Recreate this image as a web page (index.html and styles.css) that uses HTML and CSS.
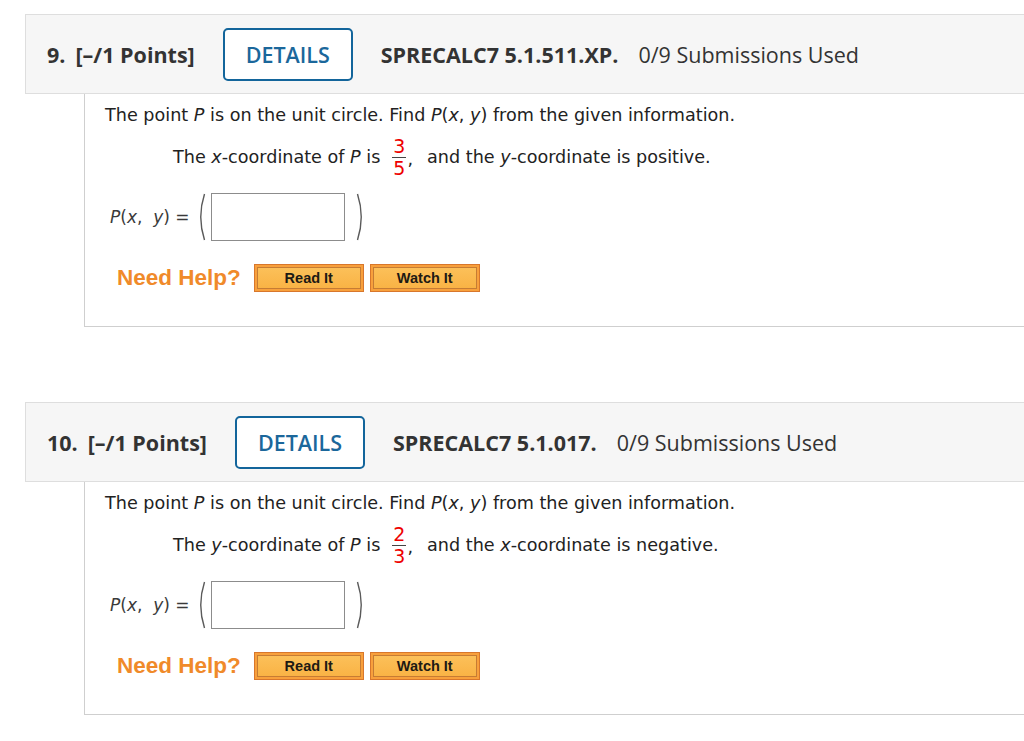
FILE: index.html
```html
<!DOCTYPE html>
<html>
<head>
<meta charset="utf-8">
<link rel="stylesheet" href="styles.css">
</head>
<body>
<div class="question">
  <div class="q-header">
    <span class="q-num">9.</span>
    <span class="q-points">[–/1 Points]</span>
    <span class="details">DETAILS</span>
    <span class="q-code">SPRECALC7 5.1.511.XP.</span>
    <span class="q-subs">0/9 Submissions Used</span>
  </div>
  <div class="q-body">
    <p class="line1">The point <i>P</i> is on the unit circle. Find <i>P</i>(<i>x</i>, <i>y</i>) from the given information.</p>
    <p class="line2"><span>The <i>x</i>-coordinate of <i>P</i> is</span><span class="frac"><span class="num">3</span><span class="den">5</span></span><span class="comma">,</span><span>and the <i>y</i>-coordinate is positive.</span></p>
    <div class="answer">
      <span class="label"><i>P</i>(<i>x</i>, &nbsp;<i>y</i>) =</span>
      <svg class="paren" width="10" height="48" viewBox="0 0 10 48"><path d="M8.5 1 Q1 24 8.5 47" fill="none" stroke="#5a5a5a" stroke-width="1.4"/></svg>
      <span class="input"></span>
      <svg class="paren close" width="10" height="48" viewBox="0 0 10 48"><path d="M1.5 1 Q9 24 1.5 47" fill="none" stroke="#5a5a5a" stroke-width="1.4"/></svg>
    </div>
    <div class="help">
      <span class="need">Need Help?</span>
      <span class="hbtn">Read It</span>
      <span class="hbtn watch">Watch It</span>
    </div>
  </div>
</div>

<div class="question second">
  <div class="q-header">
    <span class="q-num">10.</span>
    <span class="q-points">[–/1 Points]</span>
    <span class="details">DETAILS</span>
    <span class="q-code">SPRECALC7 5.1.017.</span>
    <span class="q-subs">0/9 Submissions Used</span>
  </div>
  <div class="q-body">
    <p class="line1">The point <i>P</i> is on the unit circle. Find <i>P</i>(<i>x</i>, <i>y</i>) from the given information.</p>
    <p class="line2"><span>The <i>y</i>-coordinate of <i>P</i> is</span><span class="frac"><span class="num">2</span><span class="den">3</span></span><span class="comma">,</span><span>and the <i>x</i>-coordinate is negative.</span></p>
    <div class="answer">
      <span class="label"><i>P</i>(<i>x</i>, &nbsp;<i>y</i>) =</span>
      <svg class="paren" width="10" height="48" viewBox="0 0 10 48"><path d="M8.5 1 Q1 24 8.5 47" fill="none" stroke="#5a5a5a" stroke-width="1.4"/></svg>
      <span class="input"></span>
      <svg class="paren close" width="10" height="48" viewBox="0 0 10 48"><path d="M1.5 1 Q9 24 1.5 47" fill="none" stroke="#5a5a5a" stroke-width="1.4"/></svg>
    </div>
    <div class="help">
      <span class="need">Need Help?</span>
      <span class="hbtn">Read It</span>
      <span class="hbtn watch">Watch It</span>
    </div>
  </div>
</div>
</body>
</html>
```

FILE: styles.css
```css
html, body {
  margin: 0;
  padding: 0;
  overflow: hidden;
  background: #ffffff;
}
body {
  padding-top: 14px;
  width: 1024px;
}
.question {
  margin-left: 25px;
  width: 1100px;
}
.question.second {
  margin-top: 75px;
}
.q-header {
  box-sizing: border-box;
  height: 80px;
  border: 1px solid #dedede;
  background: #f6f6f6;
  display: flex;
  align-items: center;
  padding-left: 21px;
  font-family: "Open Sans", sans-serif;
  font-size: 21.5px;
  color: #333333;
}
.q-num {
  font-weight: 700;
  margin-right: 10px;
}
.q-points {
  font-weight: 700;
}
.details {
  box-sizing: border-box;
  width: 130px;
  height: 53px;
  margin-left: 28px;
  border: 2px solid #13659b;
  border-radius: 5px;
  display: flex;
  align-items: center;
  justify-content: center;
  color: #1b679b;
  font-weight: 600;
  background: #ffffff;
}
.q-code {
  font-weight: 700;
  margin-left: 28px;
}
.q-subs {
  margin-left: 20px;
  font-weight: 400;
}
.q-body {
  margin-left: 59px;
  border-left: 1px solid #cfcfcf;
  border-bottom: 1px solid #cfcfcf;
  padding: 9px 0 34px 20px;
  font-family: "DejaVu Sans", sans-serif;
  font-size: 17.6px;
  color: #222222;
}
.q-body p {
  margin: 0;
}
.line1 {
  line-height: 24px;
}
.line2 {
  margin-left: 68px !important;
  margin-top: 10px !important;
  height: 40px;
  display: flex;
  align-items: center;
}
.frac {
  display: inline-flex;
  flex-direction: column;
  align-items: center;
  color: #ee0000;
  font-size: 19px;
  line-height: 17px;
  margin: 0 1px 0 12px;
}
.frac .num {
  border-bottom: 1px solid #444;
  padding: 0 1px 2px;
}
.frac .den {
  padding-top: 2px;
}
.comma {
  margin-right: 14px;
  position: relative;
  top: 2px;
}
.answer {
  display: flex;
  align-items: center;
  margin-top: 16px;
  margin-left: 5px;
  height: 48px;
}
.label {
  color: #3a3a3a;
  font-size: 17px;
  white-space: pre;
}
.paren {
  margin-left: 6px;
}
.input {
  box-sizing: border-box;
  width: 134px;
  height: 48px;
  border: 1px solid #8c8c8c;
  background: #fff;
  margin-left: 5px;
}
.paren.close {
  margin-left: 11px;
}
.help {
  display: flex;
  align-items: center;
  margin-top: 23px;
  margin-left: 12px;
}
.need {
  font-family: "Liberation Sans", Arial, sans-serif;
  font-weight: 700;
  font-size: 22.5px;
  color: #f08a2a;
  margin-right: 13px;
}
.hbtn {
  box-sizing: border-box;
  width: 110px;
  height: 28px;
  border: 1px solid #d8772c;
  background: linear-gradient(#fcc25c, #f9b142);
  box-shadow: inset 0 0 0 2px #f8a03c, inset 0 0 0 3px #c67c34;
  display: flex;
  align-items: center;
  justify-content: center;
  font-family: "Liberation Sans", Arial, sans-serif;
  font-weight: 700;
  font-size: 14.5px;
  color: #1e1a14;
}
.hbtn.watch {
  margin-left: 6px;
}
```
